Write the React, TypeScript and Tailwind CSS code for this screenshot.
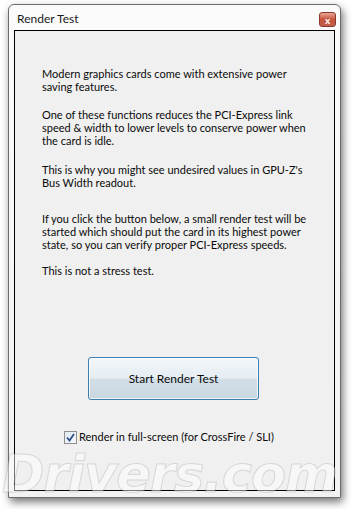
import React from 'react';

const font = { fontFamily: 'Lato, "Open Sans", sans-serif' };

export default function App() {
  return (
    <div className="w-[354px] h-[509px] bg-white relative overflow-hidden" style={font}>
      {/* Window */}
      <div className="ml-[8px] mt-[4px] w-[333px] h-[494px] flex flex-col rounded-t-[6px] border border-[#6b6b6b] bg-gradient-to-b from-[#fbfbfb] to-[#f2f2f2] shadow-[2px_4px_8px_rgba(0,0,0,0.55)] px-[5px] pb-[6px]">
        {/* Title bar */}
        <div className="h-[25px] flex items-start justify-between">
          <span className="pl-[3px] pt-[6px] text-[12px] leading-[16px] text-[#1a1a1a]">Render Test</span>
          <div className="mt-[7px] mr-[-1px] w-[17px] h-[15px] rounded-[3px] border border-[#8a3b2e] bg-gradient-to-b from-[#e8a594] via-[#c7533e] to-[#c0604c] flex items-center justify-center">
            <span className="text-white text-[10px] font-bold leading-none">x</span>
          </div>
        </div>

        {/* Client area */}
        <div className="flex-1 border border-black bg-[#f0f0f0] flex flex-col">
          <div className="pl-[27px] pt-[36px] text-[11px] leading-[13px] text-[#0a0a0a] whitespace-nowrap">
            <p>Modern graphics cards come with extensive power<br />saving features.</p>
            <p className="mt-[15px]">One of these functions reduces the PCI-Express link<br />speed &amp; width to lower levels to conserve power when<br />the card is idle.</p>
            <p className="mt-[16px]">This is why you might see undesired values in GPU-Z's<br />Bus Width readout.</p>
            <p className="mt-[23px]">If you click the button below, a small render test will be<br />started which should put the card in its highest power<br />state, so you can verify proper PCI-Express speeds.</p>
            <p className="mt-[13px]">This is not a stress test.</p>
          </div>

          <div className="mt-[80px] pl-[73px]">
            <div className="w-[171px] h-[43px] rounded-[3px] border border-[#3c7fb1] bg-[linear-gradient(to_bottom,#f1f6f9_0%,#e6eef3_48%,#d3dfe7_52%,#c9d7e1_100%)] shadow-[inset_0_0_0_1px_rgba(255,255,255,0.7)] flex items-center justify-center text-[12px] text-[#0a0a0a]">
              Start Render Test
            </div>
          </div>

          <div className="mt-[29px] pl-[49px] flex items-center gap-[2px] text-[11px] text-[#0a0a0a] whitespace-nowrap">
            <div className="w-[13px] h-[13px] border border-[#8f8f8f] bg-gradient-to-br from-[#dfe8f2] to-[#f7f9fb] flex items-center justify-center">
              <svg width="9" height="9" viewBox="0 0 9 9">
                <path d="M1 4.5 L3.5 7.5 L8 1" fill="none" stroke="#2b4f8c" strokeWidth="1.8" />
              </svg>
            </div>
            <span>Render in full-screen (for CrossFire / SLI)</span>
          </div>
        </div>
      </div>

      {/* Watermark */}
      <div
        className="absolute left-[2px] top-[449px] text-[51px] font-black italic leading-none tracking-[-1px] text-white/45 pointer-events-none"
        style={{ fontFamily: '"DejaVu Sans", sans-serif', WebkitTextStroke: '1px rgba(150,150,150,0.3)' }}
      >
        Drivers.com
      </div>
    </div>
  );
}
